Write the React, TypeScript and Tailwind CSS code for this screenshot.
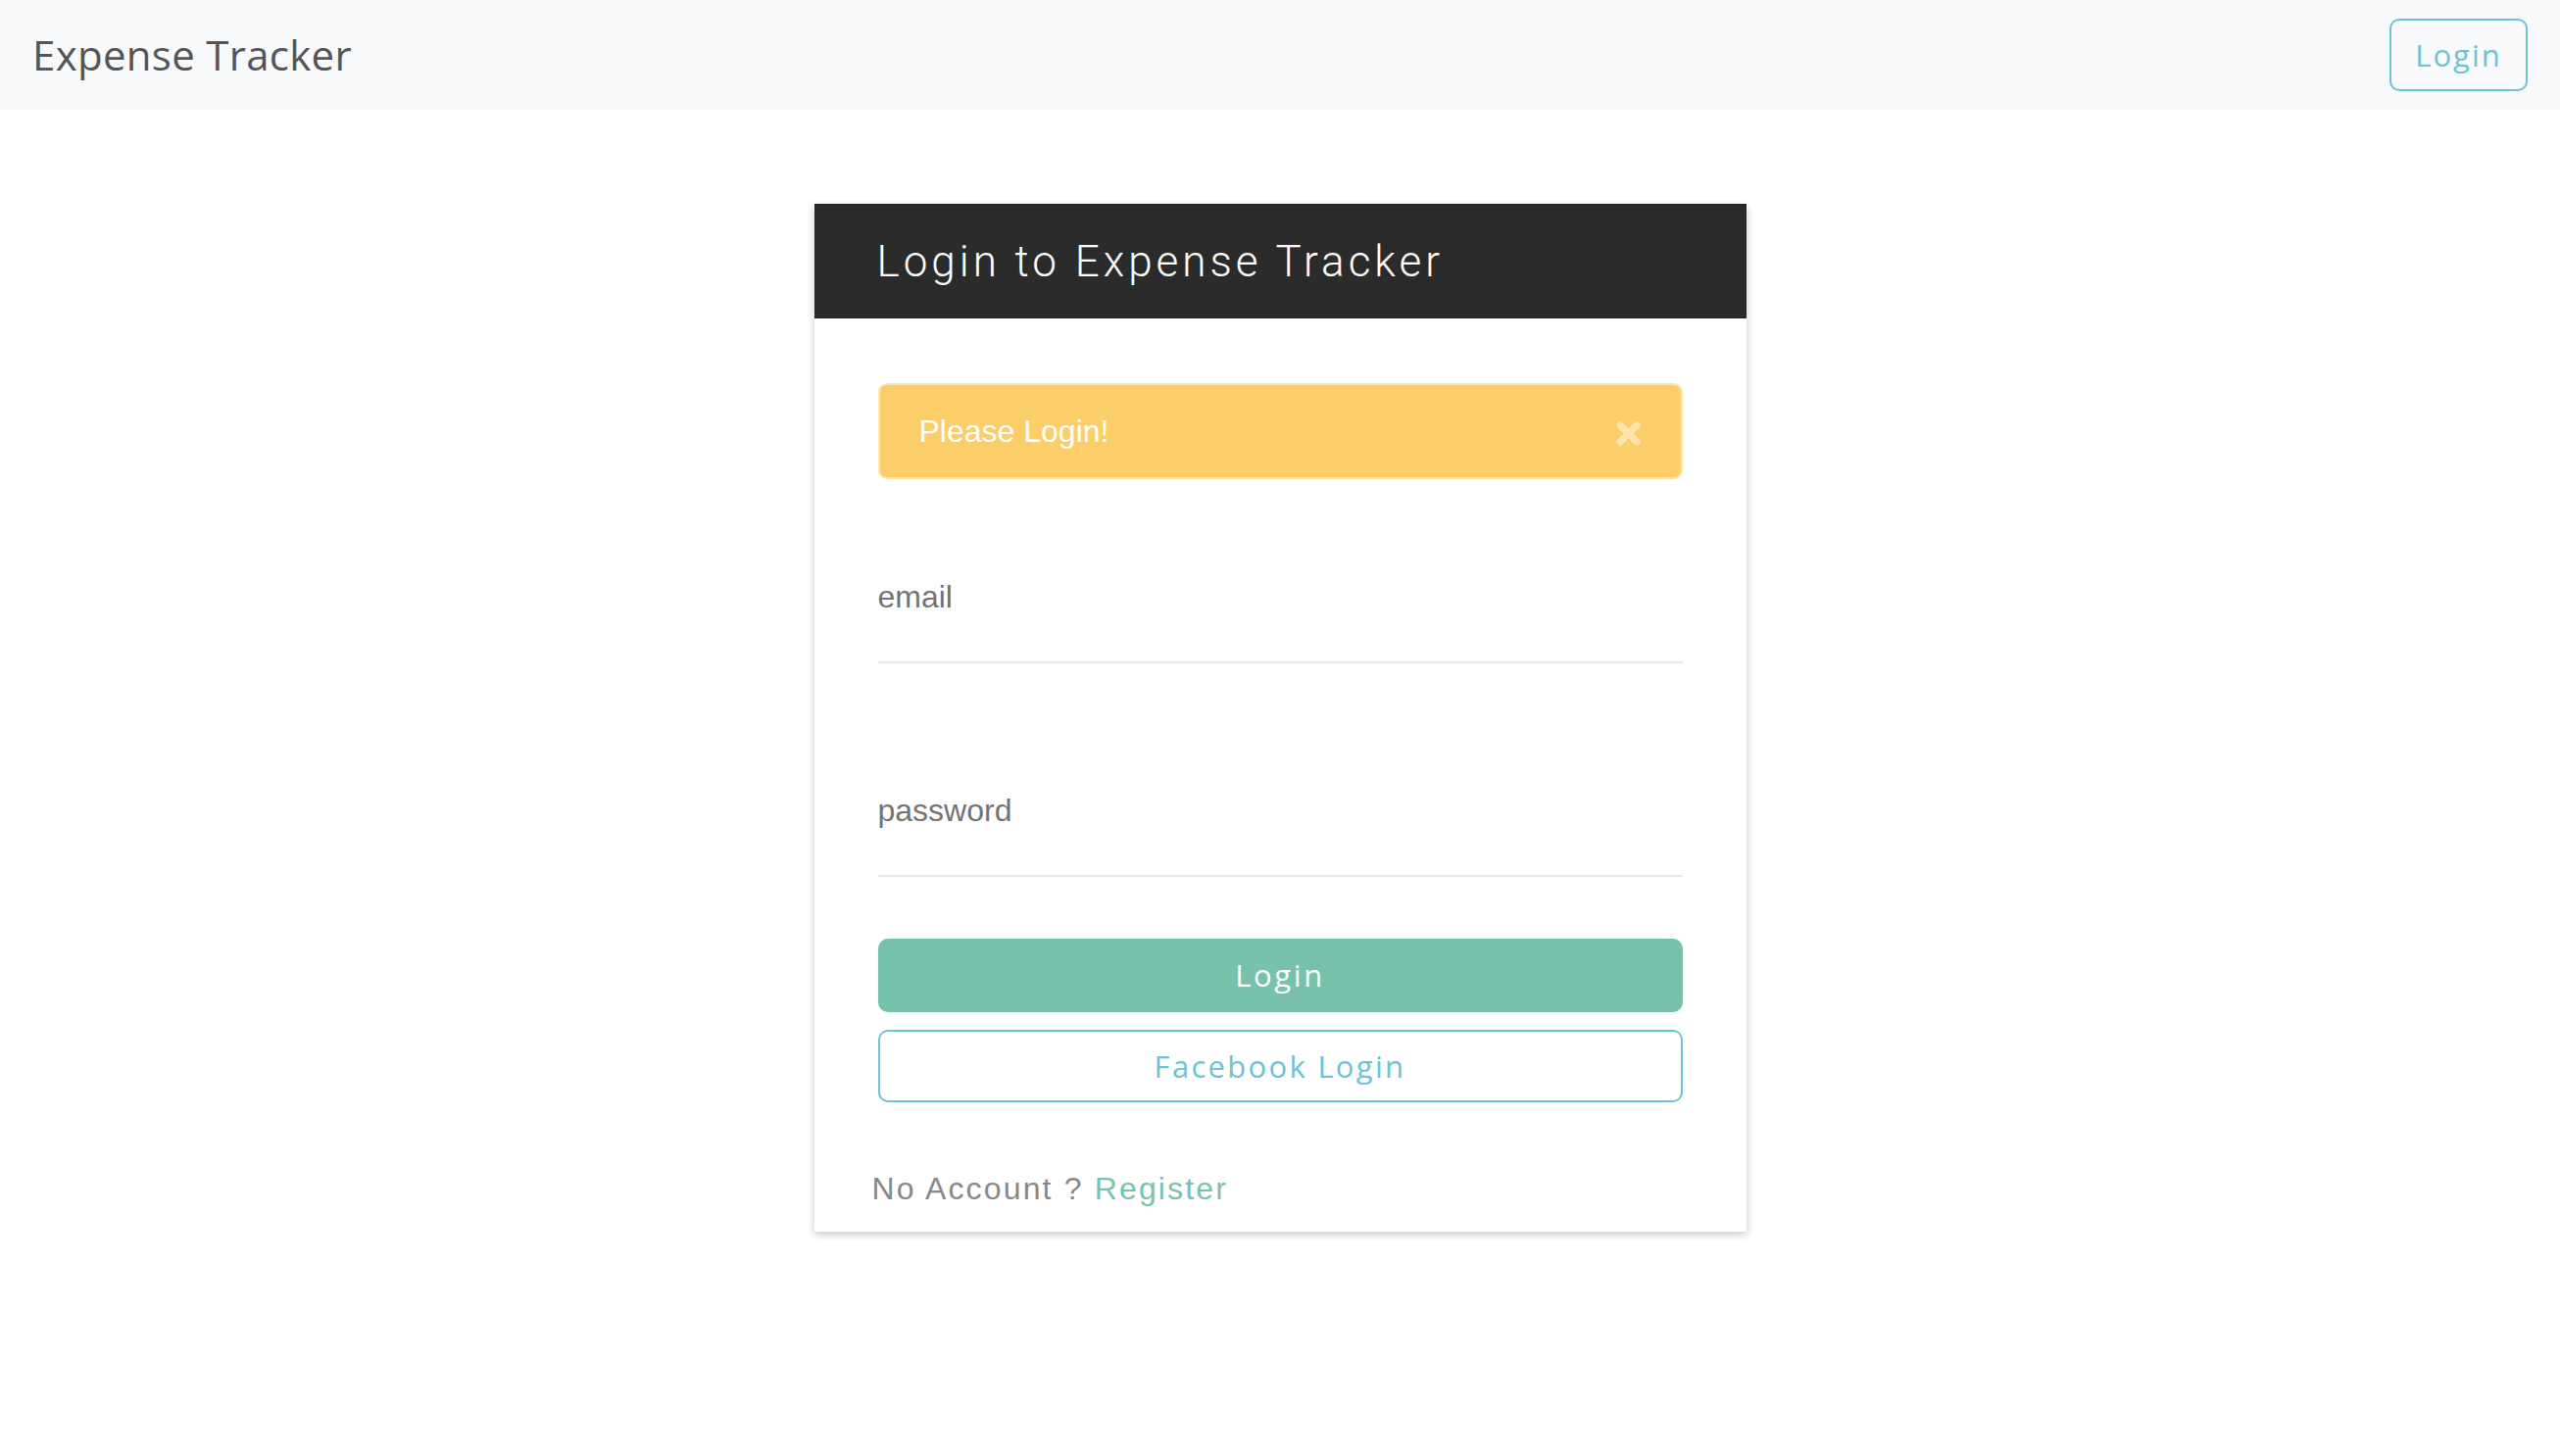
import React from "react";

const mont = { fontFamily: '"Open Sans", "Liberation Sans", sans-serif' };
const helv = { fontFamily: '"Liberation Sans", Arial, sans-serif' };

export default function App() {
  return (
    <div className="min-h-[1486px] w-full bg-white">
      <nav className="flex h-[112px] items-center justify-between bg-[#f8f9fa] pl-[33px] pr-[33px]">
        <span style={mont} className="text-[42px] leading-none tracking-[0.3px] text-[#555555]">
          Expense Tracker
        </span>
        <button
          style={mont}
          className="flex h-[74px] w-[141px] items-center justify-center rounded-[10px] border-2 border-[#6cc3d5] text-[31px] leading-none tracking-[2px] text-[#6cc3d5]"
        >
          Login
        </button>
      </nav>

      <div className="flex justify-center pt-[96px]">
        <div className="w-[951px] bg-white shadow-[0_3px_8px_rgba(0,0,0,0.22)]">
          <div className="flex h-[117px] items-center border-y border-[#222] bg-[#2b2b2b] pl-[64px]">
            <h1 style={{ fontFamily: 'Roboto, "Liberation Sans", sans-serif' }} className="text-[44px] font-light leading-none tracking-[4px] text-white">
              Login to Expense Tracker
            </h1>
          </div>

          <div className="px-[65px] pt-[66px] pb-[28px]">
            <div className="flex h-[98px] items-center justify-between rounded-[9px] border-2 border-[#fde6ae] bg-[#fcce69] pl-[40px] pr-[40px]">
              <span style={helv} className="text-[32px] leading-[32px] text-white">
                Please Login!
              </span>
              <svg width="27" height="27" viewBox="0 0 27 27" className="mt-[4px]">
                <path d="M5 5 L22 22 M22 5 L5 22" stroke="#fde4ac" strokeWidth="7" strokeLinecap="round" />
              </svg>
            </div>

            <div className="mt-[104px]">
              <label style={helv} className="block text-[32px] leading-[32px] text-[#737373]">
                email
              </label>
              <div className="h-[52px] border-b-2 border-[#e9e9e9]"></div>
            </div>

            <div className="mt-[134px]">
              <label style={helv} className="block text-[32px] leading-[32px] text-[#737373]">
                password
              </label>
              <div className="h-[52px] border-b-2 border-[#e9e9e9]"></div>
            </div>

            <button
              style={mont}
              className="mt-[63px] flex h-[75px] w-full items-center justify-center rounded-[10px] bg-[#78c2ad] text-[31px] leading-none tracking-[2.6px] text-white"
            >
              Login
            </button>
            <button
              style={mont}
              className="mt-[18px] flex h-[74px] w-full items-center justify-center rounded-[10px] border-2 border-[#6cc3d5] text-[31px] leading-none tracking-[2.3px] text-[#6cc3d5]"
            >
              Facebook Login
            </button>

            <p style={helv} className="-ml-[6px] mt-[72px] text-[32px] leading-[32px] tracking-[2.15px] text-[#888888]">
              No Account ? <span className="text-[#78c2ad]">Register</span>
            </p>
          </div>
        </div>
      </div>
    </div>
  );
}
